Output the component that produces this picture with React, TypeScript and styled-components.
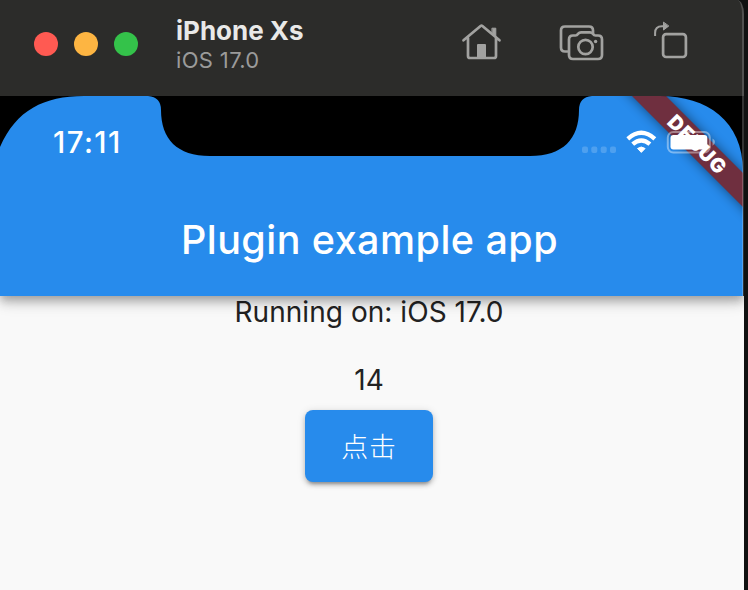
import React from 'react';
import styled, { createGlobalStyle } from 'styled-components';

const GlobalStyle = createGlobalStyle`
  * { box-sizing: border-box; }
  body { margin: 0; background: #101010; overflow: hidden; }
`;

const Stage = styled.main`
  width: 748px;
  height: 590px;
  overflow: hidden;
  background: #101111;
  font-family: Inter, 'Noto Sans CJK SC', sans-serif;
`;

const SimulatorWindow = styled.div`
  width: 744px;
  height: 590px;
  display: flex;
  flex-direction: column;
`;

const TitleBar = styled.header`
  height: 96px;
  flex: none;
  display: flex;
  align-items: flex-start;
  background: #2c2c2a;
  border-right: 2px solid #50504f;
  border-top-right-radius: 7px 14px;
`;

const TrafficLights = styled.div`
  display: flex;
  gap: 16px;
  padding: 32px 0 0 34px;
`;

const Light = styled.span<{ $color: string }>`
  width: 24px;
  height: 24px;
  border-radius: 50%;
  background: ${({ $color }) => $color};
`;

const DeviceInfo = styled.div`
  padding: 15px 0 0 38px;
  width: 320px;
`;

const DeviceName = styled.div`
  font-size: 26px;
  line-height: 32px;
  font-weight: 700;
  color: #e9e9e8;
`;

const DeviceOS = styled.div`
  font-size: 22px;
  line-height: 26px;
  letter-spacing: 0.35px;
  color: #9b9b9a;
`;

const Tools = styled.nav`
  display: flex;
  gap: 50px;
  padding-top: 20px;
`;

const ToolIcon = styled.svg`
  width: 46px;
  height: 44px;
  fill: none;
  stroke: #a2a2a0;
  stroke-width: 2.7;
  stroke-linecap: round;
  stroke-linejoin: round;
`;

const Screen = styled.section`
  flex: 1;
  display: flex;
  flex-direction: column;
  background: #f9f9f9;
`;

const AppBar = styled.div`
  position: relative;
  height: 200px;
  flex: none;
  display: flex;
  flex-direction: column;
  background: #278bec;
  box-shadow: 0 4px 8px -1px rgba(0, 0, 0, 0.2), 0 8px 10px rgba(0, 0, 0, 0.14),
    0 2px 20px rgba(0, 0, 0, 0.12);
  clip-path: inset(0 0 -40px 0);
`;

const Bezel = styled.svg`
  position: absolute;
  inset: 0;
  width: 744px;
  height: 200px;
`;

const BannerText = styled.text`
  font-family: Inter, sans-serif;
  font-size: 20px;
  font-weight: 900;
  letter-spacing: 1px;
  fill: #fff;
`;

const StatusBar = styled.div`
  position: relative;
  height: 88px;
  flex: none;
  display: flex;
  justify-content: space-between;
  padding: 28px 26px 0 53px;
`;

const Clock = styled.time`
  font-size: 29.5px;
  line-height: 36px;
  font-weight: 550;
  letter-spacing: 1.4px;
  color: #fff;
`;

const StatusIcons = styled.svg`
  width: 136px;
  height: 34px;
`;

const AppTitle = styled.h1`
  margin: 0;
  height: 112px;
  padding-right: 5px;
  text-align: center;
  font-size: 39.5px;
  line-height: 113px;
  font-weight: 450;
  letter-spacing: 0.45px;
  color: #fff;
`;

const Body = styled.div`
  display: flex;
  flex-direction: column;
  align-items: center;
  padding-right: 6px;
  color: #222;
  font-size: 28px;
  line-height: 33px;
  letter-spacing: 0.05px;
`;

const Count = styled.p`
  margin: 35px 0 13px;
`;

const Platform = styled.p`
  margin: 0;
`;

const ClickButton = styled.button`
  width: 128px;
  height: 72px;
  padding: 0 0 2px;
  border: 0;
  border-radius: 8px;
  background: #278bec;
  color: #fff;
  font-family: 'Noto Sans CJK SC', sans-serif;
  font-size: 27px;
  font-weight: 300;
  letter-spacing: 0.8px;
  box-shadow: 0 5px 3px -3px rgba(0, 0, 0, 0.22), 0 3px 5px rgba(0, 0, 0, 0.2),
    0 1px 8px rgba(0, 0, 0, 0.12);
`;

function HomeIcon() {
  return (
    <ToolIcon viewBox="458 20 46 44">
      <path d="M463.5 40.3 480.6 26Q481.5 25.3 482.4 26L499.5 40.3M468 38v18q0 2 2 2h24q2 0 2-2V38" />
      <path d="M492.3 28.2h3.5v9l-3.5-3z" fill="#a2a2a0" strokeWidth="1" />
      <path d="M477 57V45q0-1 1-1h7q1 0 1 1v12z" fill="#a2a2a0" stroke="none" />
    </ToolIcon>
  );
}

function CameraIcon() {
  return (
    <ToolIcon viewBox="554 20 46 44" overflow="visible">
      <path d="M567.5 51.5H565q-4 0-4-4V30.5q0-4 4-4h24q4 0 4 4V33" />
      <path d="M573 35.5h2.5q1.5 0 2.4-1.5l.6-.7q.8-1 2.5-1h9q1.7 0 2.5 1l.6.7q.9 1.5 2.4 1.5h2.5q4 0 4 4v15.5q0 4-4 4h-25q-4 0-4-4V39.5q0-4 4-4z" />
      <circle cx="585.5" cy="47" r="7.2" />
      <circle cx="595.6" cy="41.5" r="1.7" fill="#a2a2a0" stroke="none" />
    </ToolIcon>
  );
}

function RotateIcon() {
  return (
    <ToolIcon viewBox="650 20 46 44">
      <rect x="663.1" y="34.2" width="22.8" height="22.8" rx="3" />
      <path d="M655.1 36V33Q655.1 26.3 662 26.3h2" strokeWidth="2" strokeLinecap="butt" />
      <path d="M663.5 22.5v7.5l5-3.8z" fill="#a2a2a0" strokeWidth="1" />
    </ToolIcon>
  );
}

function DeviceBezel() {
  return (
    <Bezel viewBox="0 0 744 200">
      <defs>
        <filter id="bannerShadow" x="-20%" y="-20%" width="140%" height="140%">
          <feGaussianBlur stdDeviation="6" />
        </filter>
      </defs>
      <path d="M612 -20H646L784 118V152Z" fill="#000" opacity="0.5" filter="url(#bannerShadow)" />
      <path d="M632 0H666L744 78V112Z" fill="#6f2f3f" />
      <BannerText transform="translate(697.5 48.5) rotate(45)" textAnchor="middle" y="7.3">
        DEBUG
      </BannerText>
      <path d="M0 0H84C44 0 16 14 0 51Z" />
      <path d="M148 0Q161 1 161 14C161 43 177 60 210 60H530C563 60 579 43 579 14Q579 1 592 0Z" />
      <path d="M660 0C707 0 743 25 743 75V200H744V0Z" />
      <path d="M742 0H744V200H742Z" fill="#fff" opacity="0.2" />
    </Bezel>
  );
}

function Indicators() {
  return (
    <StatusIcons viewBox="582 28 136 34">
      <g fill="#fff" opacity="0.18">
        <rect x="582" y="50.5" width="6" height="6.5" rx="2" />
        <rect x="591.3" y="50.5" width="6" height="6.5" rx="2" />
        <rect x="600.7" y="50.5" width="6" height="6.5" rx="2" />
        <rect x="610" y="50.5" width="6" height="6.5" rx="2" />
      </g>
      <g fill="none" stroke="#fff" strokeWidth="4.3">
        <path d="M627.8 42.8Q641.3 30.8 654.8 42.8" />
        <path d="M632.7 48.2Q641.3 40.6 649.9 48.2" />
      </g>
      <path d="M637.5 52.5Q641.3 49.5 645.1 52.5L641.3 56.4Z" fill="#fff" stroke="#fff" strokeLinejoin="round" />
      <rect x="667.8" y="36" width="42" height="20.5" rx="5.5" fill="none" stroke="#fff" strokeWidth="2" opacity="0.4" />
      <path d="M712.5 42.5Q715 43.5 715 46T712.5 49.7Z" fill="#fff" opacity="0.4" />
      <rect x="670.5" y="39" width="36.8" height="14.5" rx="3" fill="#fff" />
    </StatusIcons>
  );
}

export default function App() {
  return (
    <>
      <GlobalStyle />
      <Stage>
        <SimulatorWindow>
          <TitleBar>
            <TrafficLights>
              <Light $color="#ff5a52" />
              <Light $color="#fdb542" />
              <Light $color="#34c24a" />
            </TrafficLights>
            <DeviceInfo>
              <DeviceName>iPhone Xs</DeviceName>
              <DeviceOS>iOS 17.0</DeviceOS>
            </DeviceInfo>
            <Tools>
              <HomeIcon />
              <CameraIcon />
              <RotateIcon />
            </Tools>
          </TitleBar>
          <Screen>
            <AppBar>
              <DeviceBezel />
              <StatusBar>
                <Clock>17:11</Clock>
                <Indicators />
              </StatusBar>
              <AppTitle>Plugin example app</AppTitle>
            </AppBar>
            <Body>
              <Platform>Running on: iOS 17.0</Platform>
              <Count>14</Count>
              <ClickButton type="button">点击</ClickButton>
            </Body>
          </Screen>
        </SimulatorWindow>
      </Stage>
    </>
  );
}
